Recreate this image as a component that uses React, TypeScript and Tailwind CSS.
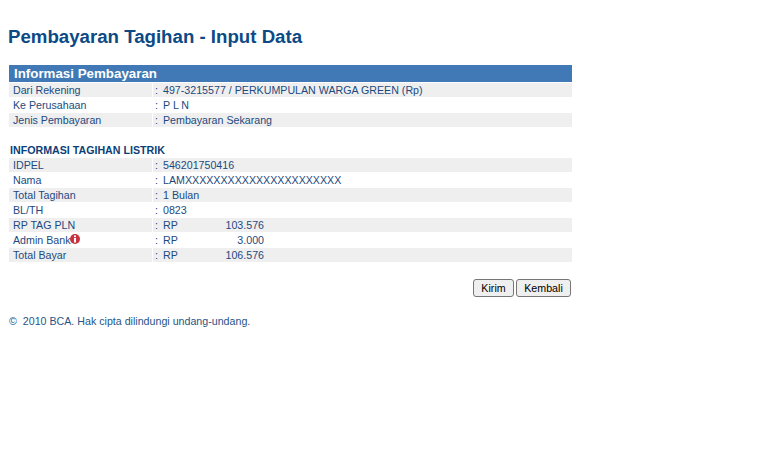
const font = "font-['Liberation_Sans',Arial,sans-serif]"

type Row = { label: string; value?: string; amount?: string; info?: boolean }

const paymentRows: Row[] = [
  { label: 'Dari Rekening', value: '497-3215577 / PERKUMPULAN WARGA GREEN (Rp)' },
  { label: 'Ke Perusahaan', value: 'P L N' },
  { label: 'Jenis Pembayaran', value: 'Pembayaran Sekarang' },
]

const billRows: Row[] = [
  { label: 'IDPEL', value: '546201750416' },
  { label: 'Nama', value: 'LAMXXXXXXXXXXXXXXXXXXXXXX' },
  { label: 'Total Tagihan', value: '1 Bulan' },
  { label: 'BL/TH', value: '0823' },
  { label: 'RP TAG PLN', amount: '103.576' },
  { label: 'Admin Bank', amount: '3.000', info: true },
  { label: 'Total Bayar', amount: '106.576' },
]

function InfoIcon() {
  return (
    <svg width="10" height="10" viewBox="0 0 10 10" className="mb-[3px] shrink-0">
      <circle cx="5" cy="5" r="5" fill="#c9333f" />
      <rect x="4" y="1.5" width="2" height="1.6" fill="#fff" />
      <rect x="4" y="4" width="2" height="4.5" fill="#fff" />
    </svg>
  )
}

function DataRows({ rows }: { rows: Row[] }) {
  return (
    <div className="flex flex-col gap-px">
      {rows.map((row, i) => (
        <div key={row.label} className="flex h-[14px] items-center leading-[14px]">
          <div className={`flex h-full w-[143px] items-center pl-1 ${i % 2 === 0 ? 'bg-[#efefef]' : ''}`}>
            {row.label}
            {row.info && <InfoIcon />}
          </div>
          <div className={`flex h-full flex-1 items-center ml-px ${i % 2 === 0 ? 'bg-[#efefef]' : ''}`}>
            <span className="w-[10px] pl-[2px]">:</span>
            {row.amount ? (
              <span className="flex">
                <span className="w-[60px]">RP</span>
                <span className="w-[41px] text-right">{row.amount}</span>
              </span>
            ) : (
              <span>{row.value}</span>
            )}
          </div>
        </div>
      ))}
    </div>
  )
}

export default function App() {
  return (
    <div className={`min-h-[457px] bg-white pt-[25px] pl-[9px] text-[10.67px] text-[#1c4a80] ${font}`}>
      <h1 className="-ml-px h-[40px] text-[18.67px] leading-[24px] font-bold text-[#0c4a86]">
        Pembayaran Tagihan - Input Data
      </h1>

      <div className="w-[563px]">
        <div className="mb-px h-[17px] bg-[#4079b5] pl-[5px] text-[13.33px] leading-[17px] font-bold text-white">
          Informasi Pembayaran
        </div>
        <DataRows rows={paymentRows} />

        <div className="mt-[16px] h-[15px] pl-px leading-[15px] font-bold text-[#0c3f78]">
          INFORMASI TAGIHAN LISTRIK
        </div>
        <DataRows rows={billRows} />

        <div className="mt-[17px] flex justify-end gap-[2px] pr-px">
          <button className="h-[18px] w-[41px] rounded-[3px] border border-[#767676] bg-[#efefef] text-[10.67px] leading-none text-black">
            Kirim
          </button>
          <button className="h-[18px] w-[55px] rounded-[3px] border border-[#767676] bg-[#efefef] text-[10.67px] leading-none text-black">
            Kembali
          </button>
        </div>

        <p className="mt-[18px] leading-[12px] text-[#1f5587]">©&nbsp; 2010 BCA. Hak cipta dilindungi undang-undang.</p>
      </div>
    </div>
  )
}
